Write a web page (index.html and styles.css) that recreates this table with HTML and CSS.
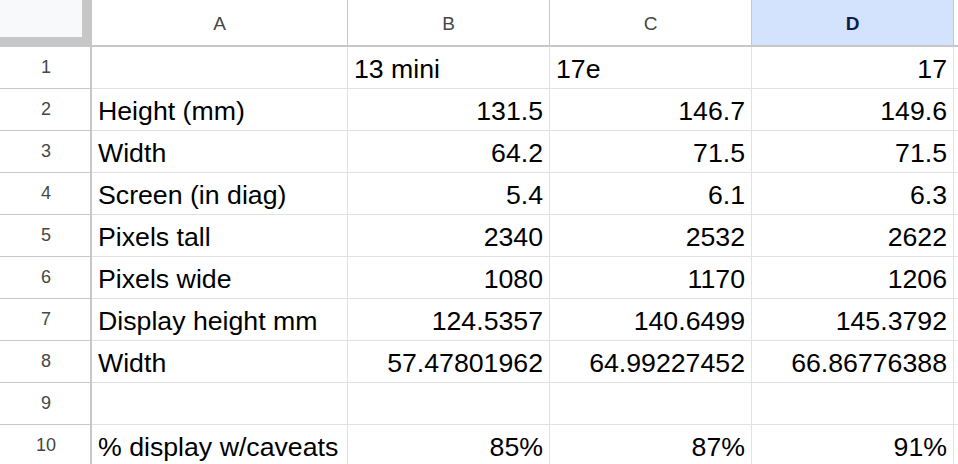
FILE: index.html
```html
<!DOCTYPE html>
<html>
<head>
<meta charset="utf-8">
<link rel="stylesheet" href="styles.css">
</head>
<body>
<div class="sheet">
  <div class="corner"><div class="corner-inner"></div></div>
  <div class="colhead">A</div>
  <div class="colhead">B</div>
  <div class="colhead">C</div>
  <div class="colhead sel">D</div>
  <div class="colhead"></div>

  <div class="rowhead">1</div>
  <div class="cell"></div>
  <div class="cell">13 mini</div>
  <div class="cell">17e</div>
  <div class="cell num">17</div>
  <div class="cell"></div>

  <div class="rowhead">2</div>
  <div class="cell">Height (mm)</div>
  <div class="cell num">131.5</div>
  <div class="cell num">146.7</div>
  <div class="cell num">149.6</div>
  <div class="cell"></div>

  <div class="rowhead">3</div>
  <div class="cell">Width</div>
  <div class="cell num">64.2</div>
  <div class="cell num">71.5</div>
  <div class="cell num">71.5</div>
  <div class="cell"></div>

  <div class="rowhead">4</div>
  <div class="cell">Screen (in diag)</div>
  <div class="cell num">5.4</div>
  <div class="cell num">6.1</div>
  <div class="cell num">6.3</div>
  <div class="cell"></div>

  <div class="rowhead">5</div>
  <div class="cell">Pixels tall</div>
  <div class="cell num">2340</div>
  <div class="cell num">2532</div>
  <div class="cell num">2622</div>
  <div class="cell"></div>

  <div class="rowhead">6</div>
  <div class="cell">Pixels wide</div>
  <div class="cell num">1080</div>
  <div class="cell num">1170</div>
  <div class="cell num">1206</div>
  <div class="cell"></div>

  <div class="rowhead">7</div>
  <div class="cell">Display height mm</div>
  <div class="cell num">124.5357</div>
  <div class="cell num">140.6499</div>
  <div class="cell num">145.3792</div>
  <div class="cell"></div>

  <div class="rowhead">8</div>
  <div class="cell">Width</div>
  <div class="cell num">57.47801962</div>
  <div class="cell num">64.99227452</div>
  <div class="cell num">66.86776388</div>
  <div class="cell"></div>

  <div class="rowhead">9</div>
  <div class="cell"></div>
  <div class="cell"></div>
  <div class="cell"></div>
  <div class="cell"></div>
  <div class="cell"></div>

  <div class="rowhead">10</div>
  <div class="cell">% display w/caveats</div>
  <div class="cell num">85%</div>
  <div class="cell num">87%</div>
  <div class="cell num">91%</div>
  <div class="cell"></div>
</div>
</body>
</html>
```
FILE: styles.css
```css
html, body {
  margin: 0;
  padding: 0;
  background: #ffffff;
  overflow: hidden;
}
.sheet {
  display: grid;
  grid-template-columns: 92px 256px 202px 202px 202px 1fr;
  grid-template-rows: 47px repeat(10, 42px);
  width: 958px;
  height: 464px;
  overflow: hidden;
  font-family: "Liberation Sans", Arial, sans-serif;
}
.corner {
  background: #c7c7c7;
  box-sizing: border-box;
}
.corner-inner {
  width: 82px;
  height: 37px;
  background: #f8f9fa;
}
.colhead {
  box-sizing: border-box;
  background: #ffffff;
  border-right: 1px solid #c7c7c7;
  border-bottom: 2px solid #c7c7c7;
  display: flex;
  align-items: center;
  justify-content: center;
  padding-top: 3px;
  font-size: 19px;
  color: #444746;
}
.colhead.sel {
  background: #d3e3fd;
  color: #0b1e4a;
  font-weight: bold;
}
.rowhead {
  box-sizing: border-box;
  background: #ffffff;
  border-right: 2px solid #c7c7c7;
  border-bottom: 1px solid #c7c7c7;
  display: flex;
  align-items: center;
  justify-content: center;
  padding-left: 2px;
  font-size: 18px;
  color: #444746;
}
.cell {
  box-sizing: border-box;
  border-right: 1px solid #e1e1e1;
  border-bottom: 1px solid #e1e1e1;
  display: flex;
  align-items: flex-end;
  padding: 0 6px 4px 6px;
  font-size: 26.7px;
  line-height: 30px;
  color: #000000;
  white-space: nowrap;
  overflow: hidden;
}
.cell.num {
  justify-content: flex-end;
}
```
